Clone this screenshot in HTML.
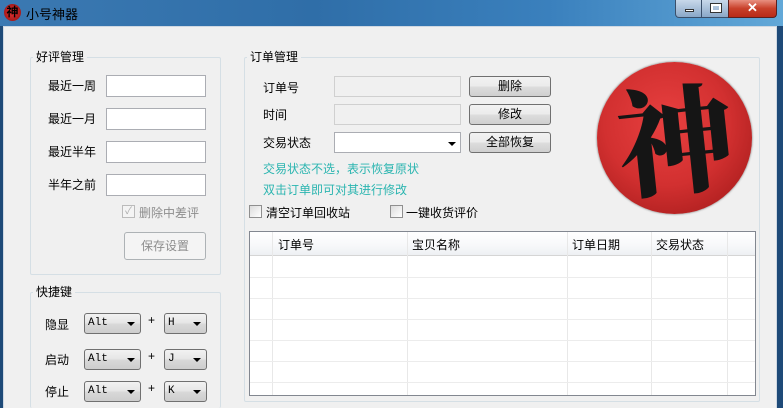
<!DOCTYPE html>
<html style="width:783px;height:408px;overflow:hidden"><head><meta charset="utf-8"><style>
*{margin:0;padding:0;box-sizing:border-box}
body{width:783px;height:408px;overflow:hidden;background:#1e4a78;font-family:"Liberation Sans","Noto Sans CJK SC",sans-serif;font-size:12px;color:#000;position:relative}
.a{position:absolute}
.title{left:0;top:0;width:783px;height:26px;background:linear-gradient(90deg,#3b79b2 0%,#2f6ea8 40%,#3a80bd 70%,#62a8d8 100%)}
.body{left:3px;top:26px;width:774px;height:382px;background:#f0f0f0;border:1px solid #cfd8e2;border-bottom:none}
.grp{border:1px solid #d5dfe5;border-radius:2px}
.gl{background:#f0f0f0;padding:0 3px;font-size:12px}
.in{background:#fff;border:1px solid #abadb3}
.dis{background:#f0f0f0;border:1px solid #d0d0d0}
.btn{border:1px solid #707070;border-radius:3px;background:linear-gradient(#f2f2f2,#ebebeb 50%,#dddddd 51%,#cfcfcf);text-align:center;line-height:19px}
.cb{width:13px;height:13px;border:1px solid #8f8f8f;background:linear-gradient(135deg,#dcdcdc,#fff)}
.combo{border:1px solid #707070;border-radius:3px;background:linear-gradient(#f2f2f2,#e5e5e5 50%,#d9d9d9 51%,#cdcdcd);font-family:"Liberation Mono",monospace;font-size:11px;line-height:19px;padding-left:3px}
.arr{position:absolute;right:5px;top:8px;width:0;height:0;border-left:4px solid transparent;border-right:4px solid transparent;border-top:4px solid #000}
.cy{color:#2bb5b0}
.vl{background:#e8e8e8;width:1px}
.hl{background:#ececec;height:1px}
</style></head><body>
<div class="a title"></div>
<div class="a" style="left:4px;top:4px;width:17px;height:17px;border-radius:50%;background:radial-gradient(#e33,#8a1010);color:#000;font-size:12px;line-height:17px;text-align:center;font-weight:bold">神</div>
<div class="a" style="left:26px;top:4px;font-size:13px;color:#000">小号神器</div>
<div class="a" style="left:675px;top:0;width:27px;height:18px;border:1px solid #3a4f6a;border-top:none;border-radius:0 0 0 4px;background:linear-gradient(#c8d8ea,#8aa8c8)"><div class="a" style="left:9px;top:9px;width:9px;height:3px;background:#fff;border:1px solid #333"></div></div>
<div class="a" style="left:701px;top:0;width:28px;height:18px;border:1px solid #3a4f6a;border-top:none;background:linear-gradient(#c8d8ea,#8aa8c8)"><div class="a" style="left:9px;top:4px;width:10px;height:8px;border:2px solid #fff;outline:1px solid #333"></div></div>
<div class="a" style="left:728px;top:0;width:49px;height:18px;border:1px solid #5a2020;border-top:none;border-radius:0 0 4px 0;background:linear-gradient(#e89080,#c8402a 50%,#b82a18);color:#fff;font-weight:bold;text-align:center;font-size:13px;line-height:16px">✕</div>
<div class="a body"></div>

<div class="a grp" style="left:30px;top:57px;width:191px;height:218px"></div>
<div class="a gl" style="left:33px;top:48px">好评管理</div>
<div class="a" style="left:48px;top:77px">最近一周</div>
<div class="a in" style="left:106px;top:75px;width:100px;height:22px"></div>
<div class="a" style="left:48px;top:110px">最近一月</div>
<div class="a in" style="left:106px;top:108px;width:100px;height:22px"></div>
<div class="a" style="left:48px;top:143px">最近半年</div>
<div class="a in" style="left:106px;top:141px;width:100px;height:22px"></div>
<div class="a" style="left:48px;top:176px">半年之前</div>
<div class="a in" style="left:106px;top:174px;width:100px;height:22px"></div>
<div class="a cb" style="left:122px;top:205px;border-color:#bbb;background:#f4f4f4;color:#aaa;font-size:10px;line-height:11px;text-align:center">✓</div>
<div class="a" style="left:139px;top:204px;color:#8d8d8d">删除中差评</div>
<div class="a" style="left:124px;top:232px;width:82px;height:28px;border:1px solid #adb2b5;border-radius:3px;background:#f4f4f4;color:#8d8d8d;text-align:center;line-height:26px">保存设置</div>

<div class="a grp" style="left:30px;top:292px;width:191px;height:116px;border-bottom:none"></div>
<div class="a gl" style="left:33px;top:283px">快捷键</div>
<div class="a" style="left:45px;top:316px">隐显</div>
<div class="a combo" style="left:84px;top:313px;width:57px;height:21px">Alt<div class="arr"></div></div>
<div class="a" style="left:148px;top:313px">+</div>
<div class="a combo" style="left:164px;top:313px;width:43px;height:21px">H<div class="arr"></div></div>
<div class="a" style="left:45px;top:351px">启动</div>
<div class="a combo" style="left:84px;top:349px;width:57px;height:21px">Alt<div class="arr"></div></div>
<div class="a" style="left:148px;top:349px">+</div>
<div class="a combo" style="left:164px;top:349px;width:43px;height:21px">J<div class="arr"></div></div>
<div class="a" style="left:45px;top:383px">停止</div>
<div class="a combo" style="left:84px;top:381px;width:57px;height:21px">Alt<div class="arr"></div></div>
<div class="a" style="left:148px;top:381px">+</div>
<div class="a combo" style="left:164px;top:381px;width:43px;height:21px">K<div class="arr"></div></div>

<div class="a grp" style="left:244px;top:57px;width:516px;height:345px"></div>
<div class="a gl" style="left:247px;top:48px">订单管理</div>
<div class="a" style="left:263px;top:79px">订单号</div>
<div class="a dis" style="left:334px;top:76px;width:127px;height:21px"></div>
<div class="a btn" style="left:469px;top:76px;width:82px;height:21px">删除</div>
<div class="a" style="left:263px;top:106px">时间</div>
<div class="a dis" style="left:334px;top:104px;width:127px;height:21px"></div>
<div class="a btn" style="left:469px;top:104px;width:82px;height:21px">修改</div>
<div class="a" style="left:263px;top:134px">交易状态</div>
<div class="a in" style="left:334px;top:132px;width:127px;height:21px"><div class="arr" style="right:4px;top:9px"></div></div>
<div class="a btn" style="left:469px;top:132px;width:82px;height:21px">全部恢复</div>
<div class="a cy" style="left:263px;top:160px">交易状态不选，表示恢复原状</div>
<div class="a cy" style="left:263px;top:181px">双击订单即可对其进行修改</div>
<div class="a cb" style="left:249px;top:205px"></div>
<div class="a" style="left:266px;top:204px">清空订单回收站</div>
<div class="a cb" style="left:390px;top:205px"></div>
<div class="a" style="left:406px;top:204px">一键收货评价</div>

<div class="a" style="left:597px;top:62px;width:155px;height:152px;border-radius:50%;background:radial-gradient(circle at 45% 40%,#e84040,#d23030 50%,#b02020 80%,#7a6060 100%);box-shadow:0 0 2px #666"></div>
<div class="a" style="left:605px;top:60px;width:140px;font-size:116px;line-height:150px;text-align:center;font-family:'Noto Serif CJK SC',serif;font-weight:900;color:#151515;transform:rotate(-6deg)">神</div>

<div class="a" style="left:249px;top:231px;width:507px;height:165px;background:#fff;border:1px solid #828790"></div>
<div class="a" style="left:250px;top:232px;width:505px;height:24px;background:linear-gradient(#fff,#f7f8fa 60%,#eef0f3);border-bottom:1px solid #d5d5d5"></div>
<div class="a" style="left:278px;top:236px">订单号</div>
<div class="a" style="left:412px;top:236px">宝贝名称</div>
<div class="a" style="left:572px;top:236px">订单日期</div>
<div class="a" style="left:656px;top:236px">交易状态</div>
<div class="a vl" style="left:272px;top:232px;height:163px"></div>
<div class="a vl" style="left:407px;top:232px;height:163px"></div>
<div class="a vl" style="left:567px;top:232px;height:163px"></div>
<div class="a vl" style="left:651px;top:232px;height:163px"></div>
<div class="a vl" style="left:727px;top:232px;height:163px"></div>
<div class="a hl" style="left:250px;top:277px;width:505px"></div>
<div class="a hl" style="left:250px;top:298px;width:505px"></div>
<div class="a hl" style="left:250px;top:319px;width:505px"></div>
<div class="a hl" style="left:250px;top:340px;width:505px"></div>
<div class="a hl" style="left:250px;top:361px;width:505px"></div>
<div class="a hl" style="left:250px;top:382px;width:505px"></div>
</body></html>
